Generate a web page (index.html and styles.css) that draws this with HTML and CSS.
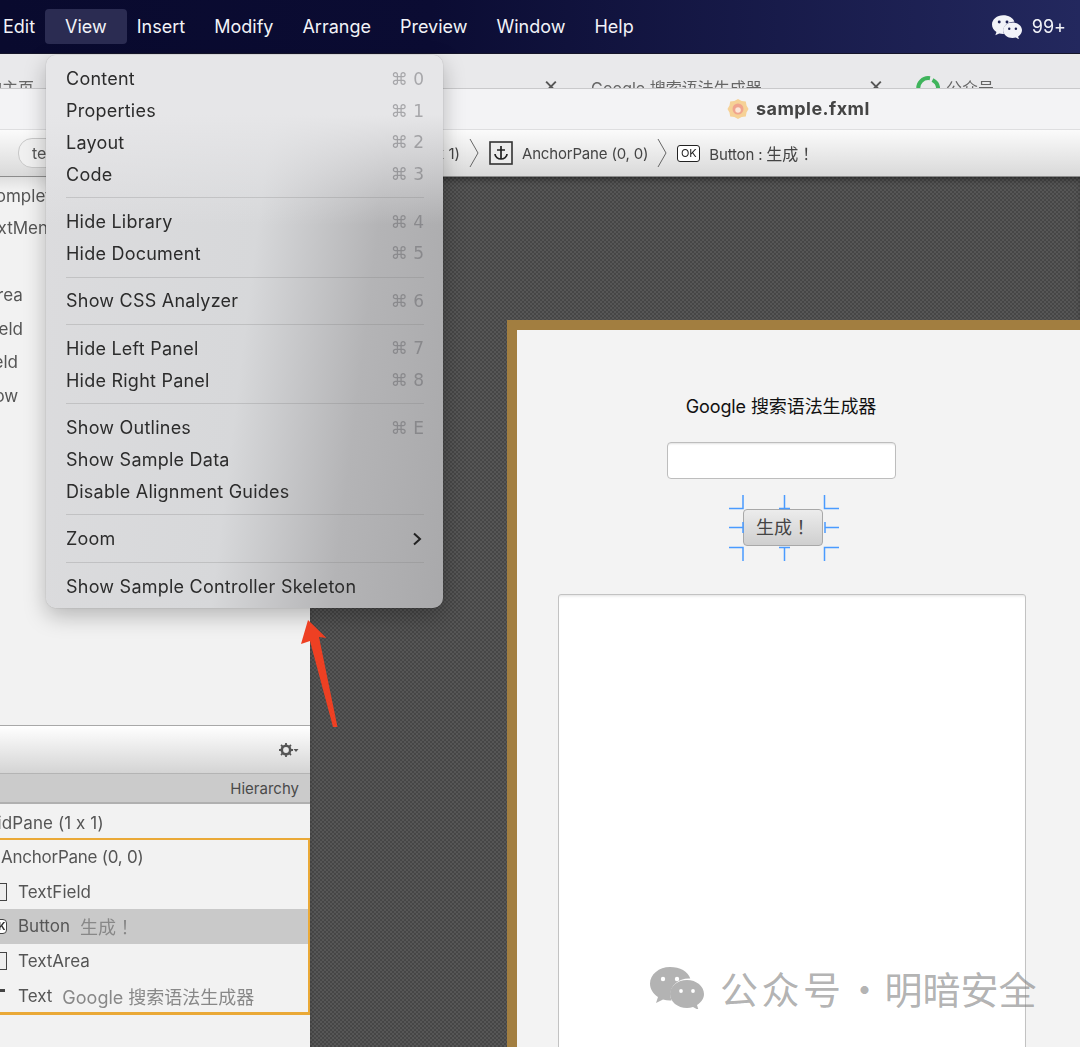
FILE: index.html
```html
<!DOCTYPE html>
<html lang="zh">
<head>
<meta charset="utf-8">
<title>sample.fxml</title>
<link rel="stylesheet" href="styles.css">
</head>
<body>
<div class="screen">
  <header class="menubar">
    <nav class="menubar-items">
      <span class="mb-item mb-edit">Edit</span>
      <span class="mb-item mb-active">View</span>
      <span class="mb-item">Insert</span>
      <span class="mb-item">Modify</span>
      <span class="mb-item">Arrange</span>
      <span class="mb-item">Preview</span>
      <span class="mb-item">Window</span>
      <span class="mb-item">Help</span>
    </nav>
    <div class="mb-status">
      <svg class="wechat-small" viewBox="0 0 54 42" aria-hidden="true">
        <path fill="#f2f3f8" d="M20 0C9 0 0 7.500 0 16.500c0 5.500 3 10 8 13.500l-2 6 7-3.500c2.300.6 4.500.9 7 .9h1.500c-.8-2-1.200-4-1.200-6 0-9 8.200-16 18.500-16h1.500C38 4.500 30 0 20 0z"/>
        <circle cx="13" cy="12" r="2.600" fill="#1d2152"/><circle cx="27" cy="12" r="2.600" fill="#1d2152"/>
        <path fill="#f2f3f8" d="M37 13c-9.400 0-17 6.300-17 14s7.600 14 17 14c2 0 4-.3 6-.9l5.500 2.900-1.500-5c4.200-2.600 7-6.500 7-11 0-7.700-7.600-14-17-14z"/>
        <circle cx="31" cy="24" r="2.200" fill="#1d2152"/><circle cx="43" cy="24" r="2.200" fill="#1d2152"/>
      </svg>
      <span class="mb-item">99+</span>
    </div>
  </header>

  <div class="tabstrip">
    <span class="tab tab-home">的主页</span>
    <span class="tab-x tab-x-a">×</span>
    <span class="tab tab-google">Google 搜索语法生成器</span>
    <span class="tab-x tab-x-b">×</span>
    <svg class="tab-logo" viewBox="0 0 24 24" aria-hidden="true"><path d="M2.500 15A10 10 0 0 1 14 3.200M16.500 5A10 10 0 0 1 22 15" fill="none" stroke="#3fb45c" stroke-width="4"/></svg>
    <span class="tab tab-pub">公众号</span>
  </div>

  <div class="titlebar">
    <svg class="doc-icon" viewBox="0 0 24 24" aria-hidden="true">
      <path fill="#f6d196" d="M12 1l4 2.200 4.500.6.800 4.400L23.500 12l-2.200 3.800-.8 4.400-4.500.6L12 23l-4-2.200-4.500-.6-.8-4.400L.5 12l2.200-3.800.8-4.400L8 3.200z"/>
      <circle cx="12" cy="12" r="6" fill="#f0a48e"/><circle cx="12" cy="13" r="3" fill="#fbe6d8"/>
    </svg>
    <span class="doc-name">sample.fxml</span>
  </div>

  <div class="crumbs">
    <span class="crumb-pill">text</span>
    <span class="crumb-grid">GridPane (1 x 1)</span>
    <svg class="crumb-chevron" viewBox="0 0 10 30" aria-hidden="true"><path d="M1 1l8 14-8 14" fill="none" stroke="#666" stroke-width="1"/></svg>
    <svg class="anchor-icon" viewBox="0 0 24 24" aria-hidden="true">
      <rect x="1" y="1" width="22" height="22" fill="#ececec" stroke="#333" stroke-width="1.600"/>
      <path d="M12 5v13M8 9h8M6 13c0 3 3 5 6 5s6-2 6-5" fill="none" stroke="#222" stroke-width="1.700"/>
    </svg>
    <span class="crumb-text">AnchorPane (0, 0)</span>
    <svg class="crumb-chevron" viewBox="0 0 10 30" aria-hidden="true"><path d="M1 1l8 14-8 14" fill="none" stroke="#666" stroke-width="1"/></svg>
    <span class="ok-icon">OK</span>
    <span class="crumb-text">Button : <span class="crumb-cjk" lang="zh-TW">生成！</span></span>
  </div>

  <main class="workspace">
    <aside class="leftpanel">
      <div class="library">
        <div class="lib-row lib-a">AutoComplete</div>
        <div class="lib-row lib-b">ContextMenu</div>
        <div class="lib-row lib-c">TextArea</div>
        <div class="lib-row lib-d">TextField</div>
        <div class="lib-row lib-e">TextField</div>
        <div class="lib-row lib-f">TableRow</div>
      </div>
      <div class="doc-toolbar">
        <svg class="gear" viewBox="0 0 20 14" aria-hidden="true">
          <circle cx="7" cy="7" r="4.200" fill="none" stroke="#555" stroke-width="2.600"/>
          <path d="M7 0v14M0 7h14M2 2l10 10M12 2L2 12" stroke="#555" stroke-width="1.800" stroke-dasharray="2 10 2 0"/>
          <path d="M14.500 6h5l-2.500 3z" fill="#555"/>
        </svg>
      </div>
      <div class="hier-head">Hierarchy</div>
      <div class="hier-row hier-grid">GridPane (1 x 1)</div>
      <div class="hier-frame">
        <div class="hier-row hier-anchor">AnchorPane (0, 0)</div>
        <div class="hier-row"><i class="node-icon"></i><span class="node">TextField</span></div>
        <div class="hier-row hier-sel"><i class="node-icon node-round">OK</i><span class="node">Button</span><span class="node-val" lang="zh-TW">生成！</span></div>
        <div class="hier-row"><i class="node-icon"></i><span class="node">TextArea</span></div>
        <div class="hier-row"><i class="node-mark"></i><span class="node">Text</span><span class="node-val">Google 搜索语法生成器</span></div>
      </div>
    </aside>

    <section class="canvas">
      <div class="stage">
        <div class="form-col">
          <div class="form-title">Google 搜索语法生成器</div>
          <div class="form-field"></div>
          <div class="btn-wrap">
            <button class="form-btn" type="button" lang="zh-TW">生成！</button>
            <svg class="handles" viewBox="0 0 110 66" aria-hidden="true">
              <path fill="none" stroke="#4a9bff" stroke-width="1.500" d="M0 13.500h14V0M50 13.500h11M55.500 0v13.500M95.500 0v13.500H110M0 32.500h14M14 27v11M96 32.500h14M96 27v11M0 52.500h14V66M50 52.500h11M55.500 52.500V66M110 52.500H95.500V66"/>
            </svg>
          </div>
        </div>
        <div class="form-area"></div>
      </div>
    </section>
  </main>

  <div class="menu">
    <div class="menu-group">
      <div class="mi"><span>Content</span><span class="sc">⌘ 0</span></div>
      <div class="mi"><span>Properties</span><span class="sc">⌘ 1</span></div>
      <div class="mi"><span>Layout</span><span class="sc">⌘ 2</span></div>
      <div class="mi"><span>Code</span><span class="sc">⌘ 3</span></div>
    </div>
    <div class="menu-group">
      <div class="mi"><span>Hide Library</span><span class="sc">⌘ 4</span></div>
      <div class="mi"><span>Hide Document</span><span class="sc">⌘ 5</span></div>
    </div>
    <div class="menu-group">
      <div class="mi"><span>Show CSS Analyzer</span><span class="sc">⌘ 6</span></div>
    </div>
    <div class="menu-group">
      <div class="mi"><span>Hide Left Panel</span><span class="sc">⌘ 7</span></div>
      <div class="mi"><span>Hide Right Panel</span><span class="sc">⌘ 8</span></div>
    </div>
    <div class="menu-group">
      <div class="mi"><span>Show Outlines</span><span class="sc">⌘ E</span></div>
      <div class="mi"><span>Show Sample Data</span></div>
      <div class="mi"><span>Disable Alignment Guides</span></div>
    </div>
    <div class="menu-group">
      <div class="mi"><span>Zoom</span>
        <svg class="submenu" viewBox="0 0 10 14" aria-hidden="true"><path d="M2 1.500L8 7l-6 5.500" fill="none" stroke="#222" stroke-width="2"/></svg>
      </div>
    </div>
    <div class="menu-group">
      <div class="mi"><span>Show Sample Controller Skeleton</span></div>
    </div>
  </div>

  <svg class="arrow" viewBox="0 0 40 110" aria-hidden="true">
    <path fill="#ee4023" d="M8 0L1 24l9-3 23 86h4.500L19 17l7.500 1z"/>
  </svg>

  <div class="watermark">
    <svg class="wm-logo" viewBox="0 0 54 42" aria-hidden="true">
      <path fill="#b3b3b3" d="M20 0C9 0 0 7.500 0 16.500c0 5.500 3 10 8 13.500l-2 6 7-3.500c2.300.6 4.500.9 7 .9h1.500c-.8-2-1.200-4-1.200-6 0-9 8.200-16 18.500-16h1.500C38 4.500 30 0 20 0z"/>
      <circle cx="13" cy="12" r="2.200" fill="#fff"/><circle cx="27" cy="12" r="2.200" fill="#fff"/>
      <path fill="#b3b3b3" d="M37 13c-9.400 0-17 6.300-17 14s7.600 14 17 14c2 0 4-.3 6-.9l5.500 2.900-1.500-5c4.200-2.600 7-6.500 7-11 0-7.700-7.600-14-17-14z"/>
      <circle cx="31" cy="24" r="1.900" fill="#fff"/><circle cx="43" cy="24" r="1.900" fill="#fff"/>
    </svg>
    <span class="wm-text"><span class="wm-a">公众号</span><span class="wm-dot">·</span><span class="wm-b">明暗安全</span></span>
  </div>
</div>
</body>
</html>
```

FILE: styles.css
```css
* { box-sizing: border-box; }
html, body { margin: 0; padding: 0; background: #f2f2f2; }
body { font-family: Inter, "Noto Sans CJK SC", sans-serif; font-variant-ligatures: no-contextual; }
.screen {
  position: relative;
  width: 1080px;
  height: 1047px;
  overflow: hidden;
  display: flex;
  flex-direction: column;
  filter: blur(.3px);
}

/* menu bar */
.menubar {
  height: 54px;
  flex: none;
  display: flex;
  align-items: center;
  justify-content: space-between;
  padding: 0 14px 0 3px;
  background: linear-gradient(90deg, #090a2e 0%, #0b0c33 40%, #23285e 100%);
  border-bottom: 1px solid #15152a;
}
.menubar-items { display: flex; align-items: center; }
.mb-item { color: #f2f3f8; font-size: 18px; line-height: 35px; margin-right: 29px; }
.mb-status .mb-item { margin-right: 0; }
.mb-edit { margin-right: 10px; }
.mb-active {
  background: #2b2c52;
  border-radius: 4px;
  padding: 0 20px;
  margin-right: 10px;
}
.mb-status { display: flex; align-items: center; gap: 10px; }
.wechat-small { width: 30px; height: 24px; }

/* browser tabs, cut off by the window below */
.tabstrip {
  height: 35px;
  flex: none;
  position: relative;
  overflow: hidden;
  background: #e9e9eb;
  border-bottom: 1px solid #c9c9cb;
}
.tab, .tab-x { position: absolute; top: 24px; font-size: 16px; line-height: 20px; color: #666; white-space: nowrap; }
.tab-home { left: -14px; }
.tab-google { left: 591px; }
.tab-pub { left: 946px; }
.tab-x { font-size: 24px; color: #555; top: 21px; }
.tab-x-a { left: 543px; }
.tab-x-b { left: 868px; }
.tab-logo { position: absolute; left: 916px; top: 21px; width: 24px; height: 24px; }

/* title bar */
.titlebar {
  height: 41px;
  flex: none;
  display: flex;
  align-items: center;
  padding: 0 0 1px 727px;
  gap: 7px;
  background: #f3f3f5;
  border-bottom: 1px solid #dedee0;
}
.doc-icon { width: 22px; height: 22px; }
.doc-name { font-size: 18px; font-weight: 700; color: #444; letter-spacing: .45px; }

/* breadcrumb */
.crumbs {
  height: 47px;
  flex: none;
  display: flex;
  align-items: center;
  padding-left: 18px;
  background: linear-gradient(#fbfbfb, #d9d9d9);
  border-bottom: 1px solid #8c8c8c;
  font-size: 15px;
  color: #444;
}
.crumb-pill {
  width: 60px;
  height: 30px;
  padding-left: 13px;
  font-size: 16px;
  line-height: 28px;
  border: 1px solid #c8c8c8;
  border-radius: 14px;
  background: #f0f0f0;
  color: #555;
  margin-right: 270px;
}
.crumb-grid { width: 112px; margin-right: 9px; white-space: nowrap; overflow: hidden; text-align: right; }
.crumb-chevron { width: 10px; height: 30px; margin-right: 10px; flex: none; }
.anchor-icon { width: 24px; height: 24px; margin-right: 9px; flex: none; }
.crumb-text { margin-right: 9px; white-space: nowrap; letter-spacing: -.18px; }
.crumb-cjk { font-size: 16px; letter-spacing: 0; }
.ok-icon {
  width: 23px;
  height: 17px;
  margin-right: 9px;
  border: 1.500px solid #222;
  border-radius: 3px;
  background: #fff;
  font-size: 11px;
  line-height: 14px;
  text-align: center;
  color: #222;
}

/* workspace */
.workspace { flex: 1; min-height: 0; display: flex; }
.leftpanel {
  width: 310px;
  flex: none;
  display: flex;
  flex-direction: column;
  overflow: hidden;
  background: #f2f2f2;
  font-size: 17px;
  color: #555;
}
.library { height: 548px; flex: none; padding-top: 4px; background: linear-gradient(#dedede, #f2f2f2 14px); }
.lib-row { line-height: 33.700px; white-space: nowrap; }
.lib-a { margin-left: -54px; line-height: 31px; }
.lib-b { margin-left: -50px; margin-bottom: 35px; line-height: 32px; }
.lib-c { margin-left: -49px; }
.lib-d { margin-left: -50px; }
.lib-e { margin-left: -55px; }
.lib-f { margin-left: -60px; }

.doc-toolbar {
  height: 49px;
  flex: none;
  display: flex;
  align-items: center;
  justify-content: flex-end;
  padding: 0 11px 0 0;
  background: linear-gradient(#ffffff, #d4d4d4);
  border-top: 1px solid #a8a8a8;
  border-bottom: 1px solid #b4b4b4;
}
.gear { width: 20px; height: 14px; }
.hier-head {
  height: 30px;
  flex: none;
  padding-right: 11px;
  text-align: right;
  font-size: 15px;
  line-height: 30px;
  background: #cbcbcb;
  border-bottom: 2px solid #b0b0b0;
  color: #4a4a4a;
}
.hier-row {
  position: relative;
  height: 34.600px;
  flex: none;
  display: flex;
  align-items: center;
  padding-left: 18px;
  white-space: nowrap;
}
.hier-grid { height: 34px; padding: 4px 0 0; margin-left: -22px; letter-spacing: .1px; }
.hier-frame {
  width: 313px;
  height: 177px;
  margin-left: -3px;
  padding: 0 0 0 3px;
  border: 2px solid #eaa937;
  border-bottom-width: 3px;
  border-left: 0;
  flex: none;
}
.hier-anchor { padding-left: 1px; letter-spacing: -.25px; }
.hier-sel { background: #c9c9c9; }
.node { margin-right: 10px; }
.node-val { color: #888; font-size: 18px; }
.node-icon {
  position: absolute;
  left: -11px;
  width: 18px;
  height: 18px;
  background: #eee;
  border: 1.500px solid #444;
  font-size: 10px;
  font-style: normal;
  font-weight: 700;
  line-height: 15px;
  text-align: center;
  color: #333;
}
.node-round { border-radius: 4px; background: #fff; height: 15px; line-height: 12px; }
.node-mark { position: absolute; left: 0; top: 11px; width: 5px; height: 3px; background: #444; }

/* canvas */
.canvas {
  flex: 1;
  min-width: 0;
  padding: 143px 0 0 197px;
  overflow: hidden;
  background-color: #4d4d4d;
  background-image: repeating-conic-gradient(#565656 0 25%, #464646 0 50%);
  background-size: 4px 4px;
  box-shadow: inset 0 5px 6px -3px rgba(0, 0, 0, .45);
}
.stage {
  width: 620px;
  height: 760px;
  border: 10px solid #a27e40;
  background: #f3f3f3;
}
.form-col { width: 528px; display: flex; flex-direction: column; align-items: center; padding-top: 66px; }
.form-title { font-size: 18px; line-height: 22px; color: #111; letter-spacing: -.1px; }
.form-field {
  width: 229px;
  height: 37px;
  margin-top: 24px;
  background: #fff;
  border: 1px solid #bdbdbd;
  border-radius: 4px;
  box-shadow: inset 0 2px 2px -1px rgba(0, 0, 0, .12);
}
.btn-wrap { position: relative; margin-top: 30px; margin-left: 4px; }
.form-btn {
  display: block;
  width: 80px;
  height: 37px;
  padding: 0 0 4px;
  background: linear-gradient(#ececec, #cfcfcf);
  border: 1px solid #a8a8a8;
  border-radius: 4px;
  font-family: Inter, "Noto Sans CJK SC", sans-serif;
  font-size: 18px;
  color: #444;
}
.handles { position: absolute; left: -14px; top: -14px; width: 110px; height: 66px; overflow: visible; }
.form-area {
  width: 468px;
  height: 500px;
  margin: 48px 0 0 41px;
  background: #fff;
  border: 1px solid #c2c2c2;
  border-radius: 3px;
  box-shadow: inset 0 3px 3px -2px rgba(0, 0, 0, .12);
}

/* dropdown */
.menu {
  position: absolute;
  left: 46px;
  top: 55px;
  width: 397px;
  height: 553px;
  padding: 8px 19px 0 20px;
  border-radius: 10px;
  background:
    linear-gradient(180deg, #e6e6e8 0, #e6e6e8 60px, rgba(230, 230, 232, 0) 170px),
    linear-gradient(97deg, #dcdcde 0, #d7d8da 50%, #b4b4b6 76%, #a9a9ab 100%);
  box-shadow: 0 0 1px rgba(0, 0, 0, .35), 0 8px 22px rgba(0, 0, 0, .25);
  color: #2c2c2c;
  font-size: 18px;
  letter-spacing: .23px;
}
.menu-group { padding-bottom: 7.300px; margin-bottom: 7.450px; border-bottom: 1px solid rgba(120, 120, 120, .25); }
.menu-group:last-child { border-bottom: 0; }
.mi { height: 31.750px; display: flex; align-items: center; justify-content: space-between; white-space: nowrap; }
.sc { color: rgba(90, 90, 95, .45); font-family: "DejaVu Sans", sans-serif; font-size: 17px; letter-spacing: 0; }
.submenu { width: 10px; height: 14px; margin-right: 2px; }

/* annotation */
.arrow { position: absolute; left: 300px; top: 620px; width: 40px; height: 110px; }

/* watermark */
.watermark { position: absolute; left: 650px; top: 962px; display: flex; align-items: center; gap: 16px; }
.wm-logo { width: 54px; height: 42px; }
.wm-text { display: flex; font-family: "Noto Sans CJK SC", sans-serif; font-size: 38px; line-height: 52px; color: rgba(130, 130, 130, .62); white-space: nowrap; }
.wm-a { letter-spacing: 3.500px; }
.wm-dot { width: 40px; text-align: center; }
.wm-b { letter-spacing: 0; }
```
